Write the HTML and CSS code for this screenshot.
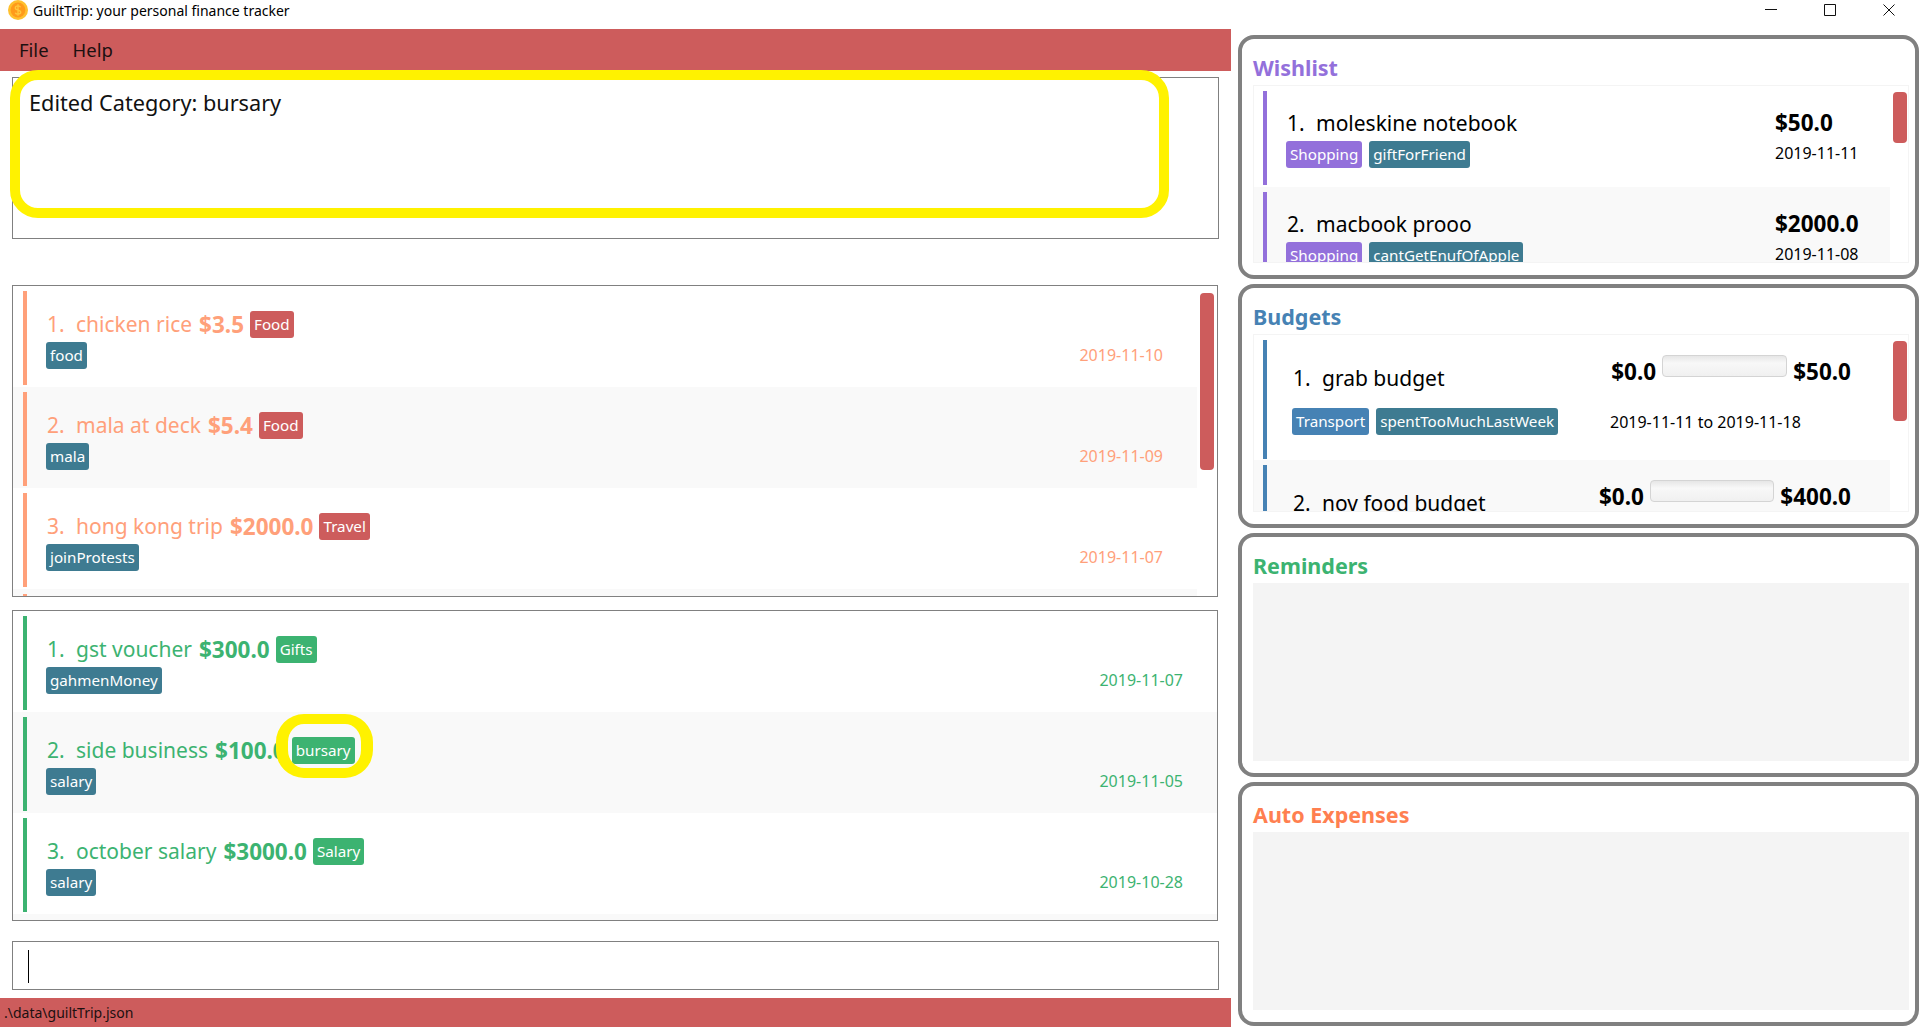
FILE: index.html
```html
<!DOCTYPE html>
<html lang="en">
<head>
  <meta charset="UTF-8" />
  <title>GuiltTrip: your personal finance tracker</title>
  <link rel="stylesheet" href="styles.css">
</head>
<body>
  <div class="titlebar">
    <svg class="app-icon" viewBox="0 0 20 20">
      <circle cx="10" cy="10" r="10" fill="#ffc02e" />
      <circle cx="10" cy="10" r="7.4" fill="#ff9a1a" />
      <path d="M12.6 7.2c-.5-1-1.500-1.400-2.600-1.400-1.500 0-2.700.8-2.700 2.100 0 2.800 5.500 1.500 5.500 4.200 0 1.300-1.200 2.100-2.800 2.100-1.200 0-2.300-.5-2.800-1.500M10 4.200v11.600" fill="none" stroke="#ffc83d" stroke-width="1.300" />
    </svg>
    <span class="app-title">GuiltTrip: your personal finance tracker</span>
    <div class="window-controls">
      <svg class="win-btn win-min" viewBox="0 0 12 12"><path d="M0 5.500h12" /></svg>
      <svg class="win-btn win-max" viewBox="0 0 12 12"><path d="M.5.500h11v11H.5z" /></svg>
      <svg class="win-btn win-close" viewBox="0 0 12 12"><path d="M.5.500l11 11M11.500.500l-11 11" /></svg>
    </div>
  </div>

  <div class="main">
    <div class="left-col">
      <div class="menubar">
        <span class="menu-item">File</span>
        <span class="menu-item">Help</span>
      </div>

      <div class="result-box">Edited Category: bursary</div>
      <div class="highlight highlight-result"></div>

      <div class="list-box expense-list">
        <div class="list-rows">
          <div class="entry">
            <div class="entry-bar"></div>
            <div class="entry-body">
              <div class="entry-line"><span class="entry-index">1.</span><span>chicken rice</span><b class="entry-amount">$3.5</b><span class="tag tag-food">Food</span></div>
              <div class="entry-line entry-tags"><span class="tag">food</span><span class="entry-date">2019-11-10</span></div>
            </div>
          </div>
          <div class="entry">
            <div class="entry-bar"></div>
            <div class="entry-body">
              <div class="entry-line"><span class="entry-index">2.</span><span>mala at deck</span><b class="entry-amount">$5.4</b><span class="tag tag-food">Food</span></div>
              <div class="entry-line entry-tags"><span class="tag">mala</span><span class="entry-date">2019-11-09</span></div>
            </div>
          </div>
          <div class="entry">
            <div class="entry-bar"></div>
            <div class="entry-body">
              <div class="entry-line"><span class="entry-index">3.</span><span>hong kong trip</span><b class="entry-amount">$2000.0</b><span class="tag tag-food">Travel</span></div>
              <div class="entry-line entry-tags"><span class="tag">joinProtests</span><span class="entry-date">2019-11-07</span></div>
            </div>
          </div>
          <div class="entry">
            <div class="entry-bar"></div>
          </div>
        </div>
        <div class="scroll-track">
          <div class="scroll-thumb thumb-expense"></div>
        </div>
      </div>

      <div class="list-box income-list">
        <div class="list-rows">
          <div class="entry">
            <div class="entry-bar"></div>
            <div class="entry-body">
              <div class="entry-line"><span class="entry-index">1.</span><span>gst voucher</span><b class="entry-amount">$300.0</b><span class="tag tag-income">Gifts</span></div>
              <div class="entry-line entry-tags"><span class="tag">gahmenMoney</span><span class="entry-date">2019-11-07</span></div>
            </div>
          </div>
          <div class="entry">
            <div class="entry-bar"></div>
            <div class="entry-body">
              <div class="entry-line"><span class="entry-index">2.</span><span>side business</span><b class="entry-amount">$100.0</b><span class="tag tag-income">bursary</span></div>
              <div class="entry-line entry-tags"><span class="tag">salary</span><span class="entry-date">2019-11-05</span></div>
            </div>
          </div>
          <div class="entry">
            <div class="entry-bar"></div>
            <div class="entry-body">
              <div class="entry-line"><span class="entry-index">3.</span><span>october salary</span><b class="entry-amount">$3000.0</b><span class="tag tag-income">Salary</span></div>
              <div class="entry-line entry-tags"><span class="tag">salary</span><span class="entry-date">2019-10-28</span></div>
            </div>
          </div>
          <div class="entry"></div>
        </div>
      </div>
      <div class="highlight highlight-tag"></div>

      <div class="command-box"><div class="caret"></div></div>

      <div class="statusbar">.\data\guiltTrip.json</div>
    </div>

    <div class="right-col">
      <div class="panel">
        <div class="panel-title title-wishlist">Wishlist</div>
        <div class="panel-list wishlist">
          <div class="list-rows">
            <div class="entry">
              <div class="entry-bar"></div>
              <div class="entry-body">
                <div class="entry-line"><span class="entry-index">1.</span><span>moleskine notebook</span></div>
                <div class="entry-line entry-tags"><span class="tag tag-wish">Shopping</span><span class="tag">giftForFriend</span></div>
              </div>
              <div class="wish-side">
                <b class="side-price">$50.0</b>
                <span class="side-date">2019-11-11</span>
              </div>
            </div>
            <div class="entry">
              <div class="entry-bar"></div>
              <div class="entry-body">
                <div class="entry-line"><span class="entry-index">2.</span><span>macbook prooo</span></div>
                <div class="entry-line entry-tags"><span class="tag tag-wish">Shopping</span><span class="tag">cantGetEnufOfApple</span></div>
              </div>
              <div class="wish-side">
                <b class="side-price">$2000.0</b>
                <span class="side-date">2019-11-08</span>
              </div>
            </div>
          </div>
          <div class="scroll-track">
            <div class="scroll-thumb thumb-wish"></div>
          </div>
        </div>
      </div>

      <div class="panel">
        <div class="panel-title title-budgets">Budgets</div>
        <div class="panel-list budgets">
          <div class="list-rows">
            <div class="entry">
              <div class="entry-bar"></div>
              <div class="entry-body">
                <div class="entry-line"><span class="entry-index">1.</span><span>grab budget</span></div>
                <div class="entry-line entry-tags"><span class="tag tag-budget">Transport</span><span class="tag">spentTooMuchLastWeek</span></div>
              </div>
              <div class="budget-side">
                <div class="budget-amounts"><b>$0.0</b><div class="budget-meter"></div><b>$50.0</b></div>
                <span class="side-date">2019-11-11 to 2019-11-18</span>
              </div>
            </div>
            <div class="entry">
              <div class="entry-bar"></div>
              <div class="entry-body">
                <div class="entry-line"><span class="entry-index">2.</span><span>nov food budget</span></div>
              </div>
              <div class="budget-side">
                <div class="budget-amounts"><b>$0.0</b><div class="budget-meter"></div><b>$400.0</b></div>
              </div>
            </div>
          </div>
          <div class="scroll-track">
            <div class="scroll-thumb thumb-budget"></div>
          </div>
        </div>
      </div>

      <div class="panel">
        <div class="panel-title title-reminders">Reminders</div>
        <div class="panel-empty"></div>
      </div>

      <div class="panel">
        <div class="panel-title title-auto">Auto Expenses</div>
        <div class="panel-empty"></div>
      </div>
    </div>
  </div>
</body>
</html>
```

FILE: styles.css
```css
* {
  box-sizing: border-box;
}

html, body {
  margin: 0;
  height: 100%;
  overflow: hidden;
}

body {
  font-family: "Noto Sans", "Open Sans", sans-serif;
  color: #000;
  background: #fff;
  display: flex;
  flex-direction: column;
}

/* window chrome */
.titlebar {
  height: 29px;
  flex: none;
  display: flex;
  align-items: flex-start;
  position: relative;
}

.app-icon {
  width: 20px;
  height: 20px;
  margin-left: 8px;
}

.app-title {
  margin-left: 5px;
  font-size: 14px;
  line-height: 22px;
}

.window-controls {
  position: absolute;
  top: 4px;
  right: 24px;
  display: flex;
  gap: 47px;
}

.win-btn {
  width: 12px;
  height: 12px;
  fill: none;
  stroke: #111;
  stroke-width: 1;
}

.main {
  flex: 1;
  display: flex;
  min-height: 0;
}

/* left column */
.left-col {
  width: 1231px;
  flex: none;
  display: flex;
  flex-direction: column;
  position: relative;
}

.menubar {
  height: 42px;
  background: #cd5c5c;
  display: flex;
  padding: 0 0 2px 19px;
  gap: 24px;
  align-items: center;
  font-size: 18.5px;
  color: #1c1010;
}

.result-box {
  height: 162px;
  margin: 6px 12px 0;
  border: 1.5px solid #808080;
  padding: 11px 16px;
  font-size: 21.7px;
  line-height: 28px;
  color: #111;
}

.highlight {
  position: absolute;
  border: 10px solid #fff200;
  pointer-events: none;
}

.highlight-result {
  left: 10px;
  top: 41px;
  width: 1159px;
  height: 148px;
  border-radius: 28px;
}

.highlight-tag {
  left: 276px;
  top: 685px;
  width: 97px;
  height: 64px;
  border-width: 10px 12px;
  border-radius: 28px;
}

.list-box {
  margin: 0 13px 0 12px;
  border: 1.5px solid #808080;
  display: flex;
  overflow: hidden;
}

.expense-list {
  height: 312px;
  margin-top: 46px;
}

.income-list {
  height: 311px;
  margin-top: 13px;
}

.list-rows {
  flex: 1;
  min-width: 0;
}

.scroll-track {
  flex: none;
  width: 20px;
  padding: 7px 3px 0 3px;
}

.panel-list .scroll-track {
  width: 18px;
  padding: 6px 1px 0 3px;
}

.scroll-thumb {
  background: #cd5c5c;
  border-radius: 4px;
}

.thumb-expense {
  height: 177px;
}

.thumb-wish {
  height: 51px;
}

.thumb-budget {
  height: 80px;
}

.entry {
  height: 101px;
  display: flex;
  padding-top: 5px;
}

.entry:nth-child(even) {
  background: #f9f9f9;
}

.entry-bar {
  width: 4px;
  height: 94px;
  margin-left: 10px;
  flex: none;
}

.expense-list .entry-bar {
  background: #ffa07a;
}

.income-list .entry-bar {
  background: #3cb371;
}

.entry-body {
  flex: 1;
  min-width: 0;
  padding: 20px 34px 0 19px;
  font-size: 21px;
}

.expense-list .entry-body {
  color: #ffa07a;
}

.income-list .entry-body {
  color: #3cb371;
}

.entry-line {
  display: flex;
  align-items: center;
  height: 27px;
  line-height: 27px;
  padding-left: 1px;
  white-space: nowrap;
}

.entry-index {
  width: 29px;
  flex: none;
}

.entry-amount {
  margin-left: 7px;
  font-size: 22.5px;
}

.entry-tags {
  margin-top: 4px;
  padding-left: 0;
  gap: 7px;
}

.tag {
  height: 27px;
  padding: 0 4px;
  border-radius: 3px;
  background: #3e7b91;
  color: #fff;
  font-size: 15.2px;
  line-height: 26px;
  flex: none;
}

.entry-amount + .tag {
  margin-left: 6px;
}

.tag-food {
  background: #cd5c5c;
}

.tag-income {
  background: #3cb371;
}

.tag-wish {
  background: #9370db;
}

.tag-budget {
  background: #4682b4;
}

.entry-date {
  margin-left: auto;
  font-size: 16px;
}

/* right column */
.right-col {
  flex: 1;
  padding: 6px 0 0 7px;
  display: flex;
  flex-direction: column;
  gap: 5px;
}

.panel {
  height: 244px;
  flex: none;
  width: 681px;
  border: 4px solid #808080;
  border-radius: 16px;
  padding: 15px 6px 0 11px;
  display: flex;
  flex-direction: column;
}

.panel-title {
  font-size: 21.5px;
  font-weight: 700;
  line-height: 28px;
  height: 31px;
}

.title-wishlist {
  color: #9370db;
}

.title-budgets {
  color: #4682b4;
}

.title-reminders {
  color: #3cb371;
}

.title-auto {
  color: #ff7f50;
}

.panel-list {
  height: 178px;
  flex: none;
  border: 1px solid #f4f4f4;
  display: flex;
  overflow: hidden;
}

.panel-empty {
  height: 178px;
  flex: none;
  background: #f4f4f4;
}

.panel-list .entry-bar {
  margin-left: 9px;
}

.wishlist .entry-bar {
  background: #9370db;
}

.budgets .entry {
  height: 125px;
}

.budgets .entry-bar {
  background: #4682b4;
  height: 119px;
}

.wishlist .entry-body {
  padding: 19px 0 0 19px;
}

.budgets .entry-body {
  padding: 25px 0 0 25px;
}

.budgets .entry-tags {
  margin-top: 16px;
}

.wish-side {
  width: 115px;
  flex: none;
  padding-top: 18px;
  display: flex;
  flex-direction: column;
}

.side-price {
  font-size: 22.5px;
  line-height: 27px;
}

.side-date {
  font-size: 16px;
  line-height: 22px;
  margin-top: 6px;
}

.budget-side {
  width: 291px;
  flex: none;
  padding: 18px 39px 0 0;
  display: flex;
  flex-direction: column;
}

.budget-amounts {
  display: flex;
  justify-content: flex-end;
  gap: 6px;
  font-size: 22.5px;
  line-height: 27px;
  white-space: nowrap;
}

.budget-meter {
  width: 125px;
  height: 22px;
  margin-top: -3px;
  border: 1px solid #d4d4d4;
  border-radius: 4px;
  background: linear-gradient(#e6e6e6, #f8f8f8 35%, #f0f0f0);
}

.budget-side .side-date {
  margin-top: 26px;
  padding-left: 11px;
}

/* bottom of left column */
.command-box {
  height: 49px;
  margin: 20px 12px 0;
  border: 1.5px solid #808080;
  padding: 8px 15px;
}

.caret {
  width: 1px;
  height: 33px;
  background: #000;
}

.statusbar {
  height: 29px;
  margin-top: 8px;
  background: #cd5c5c;
  padding-left: 4px;
  font-size: 14px;
  line-height: 29px;
  color: #1c1010;
}
```
